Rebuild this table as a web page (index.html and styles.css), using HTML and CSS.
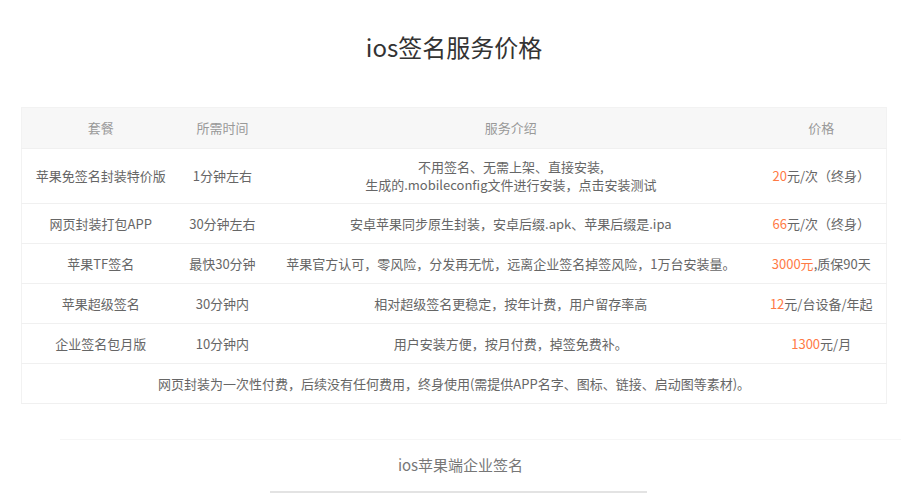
FILE: index.html
```html
<!DOCTYPE html>
<html>
<head>
  <meta charset="utf-8">
  <title>ios签名服务价格</title>
  <link rel="stylesheet" href="styles.css">
</head>
<body>
<div class="wrap">
  <h2 class="title">ios签名服务价格</h2>
  <table class="price">
    <tr class="head">
      <th class="c1">套餐</th>
      <th class="c2">所需时间</th>
      <th class="c3">服务介绍</th>
      <th class="c4">价格</th>
    </tr>
    <tr class="tall">
      <td>苹果免签名封装特价版</td>
      <td>1分钟左右</td>
      <td>不用签名、无需上架、直接安装,<br>生成的.mobileconfig文件进行安装，点击安装测试</td>
      <td><span class="num">20</span>元/次（终身）</td>
    </tr>
    <tr>
      <td>网页封装打包APP</td>
      <td>30分钟左右</td>
      <td>安卓苹果同步原生封装，安卓后缀.apk、苹果后缀是.ipa</td>
      <td><span class="num">66</span>元/次（终身）</td>
    </tr>
    <tr>
      <td>苹果TF签名</td>
      <td>最快30分钟</td>
      <td>苹果官方认可，零风险，分发再无忧，远离企业签名掉签风险，1万台安装量。</td>
      <td><span class="num">3000元</span>,质保90天</td>
    </tr>
    <tr>
      <td>苹果超级签名</td>
      <td>30分钟内</td>
      <td>相对超级签名更稳定，按年计费，用户留存率高</td>
      <td><span class="num">12</span>元/台设备/年起</td>
    </tr>
    <tr>
      <td>企业签名包月版</td>
      <td>10分钟内</td>
      <td>用户安装方便，按月付费，掉签免费补。</td>
      <td><span class="num">1300</span>元/月</td>
    </tr>
    <tr>
      <td colspan="4">网页封装为一次性付费，后续没有任何费用，终身使用(需提供APP名字、图标、链接、启动图等素材)。</td>
    </tr>
  </table>
</div>
<div class="section">
  <h3 class="subtitle">ios苹果端企业签名</h3>
  <div class="bar"></div>
</div>
</body>
</html>
```
FILE: styles.css
```css
body {
    margin: 0;
    background: #fff;
    font-family: "Noto Sans CJK SC", "Noto Sans", sans-serif;
    color: #666;
}
.wrap {
    width: 866px;
    margin-left: 21px;
}
.title {
    margin: 0;
    padding-top: 31px;
    height: 107px;
    box-sizing: border-box;
    text-align: center;
    font-size: 24px;
    font-weight: normal;
    line-height: 32px;
    color: #333;
}
.price {
    width: 100%;
    border-collapse: collapse;
    border: 1px solid #f2f2f2;
    font-size: 13px;
}
.price th,
.price td {
    padding: 11px 4px;
    line-height: 17px;
    text-align: center;
    border-bottom: 1px solid #f0f0f0;
    font-weight: normal;
    white-space: nowrap;
}
.price th {
    background: #f7f7f7;
    color: #999;
    line-height: 18px;
}
.price .tall td {
    padding: 9px 4px;
    line-height: 18px;
}
.c1 { width: 150px; }
.c2 { width: 78px; }
.c3 { width: 484px; }
.c4 { width: 122px; }
.num {
    color: #ff7a45;
}
.section {
    margin-top: 35px;
    border-top: 1px solid #f6f6f6;
    margin-left: 60px;
    margin-right: 20px;
    padding-top: 14px;
}
.subtitle {
    margin: 0 -20px 0 -60px;
    text-align: center;
    font-size: 15px;
    font-weight: normal;
    line-height: 22px;
    color: #777;
}
.bar {
    width: 377px;
    height: 2px;
    background: #e3e3e3;
    margin: 15px 0 0 210px;
}
```
